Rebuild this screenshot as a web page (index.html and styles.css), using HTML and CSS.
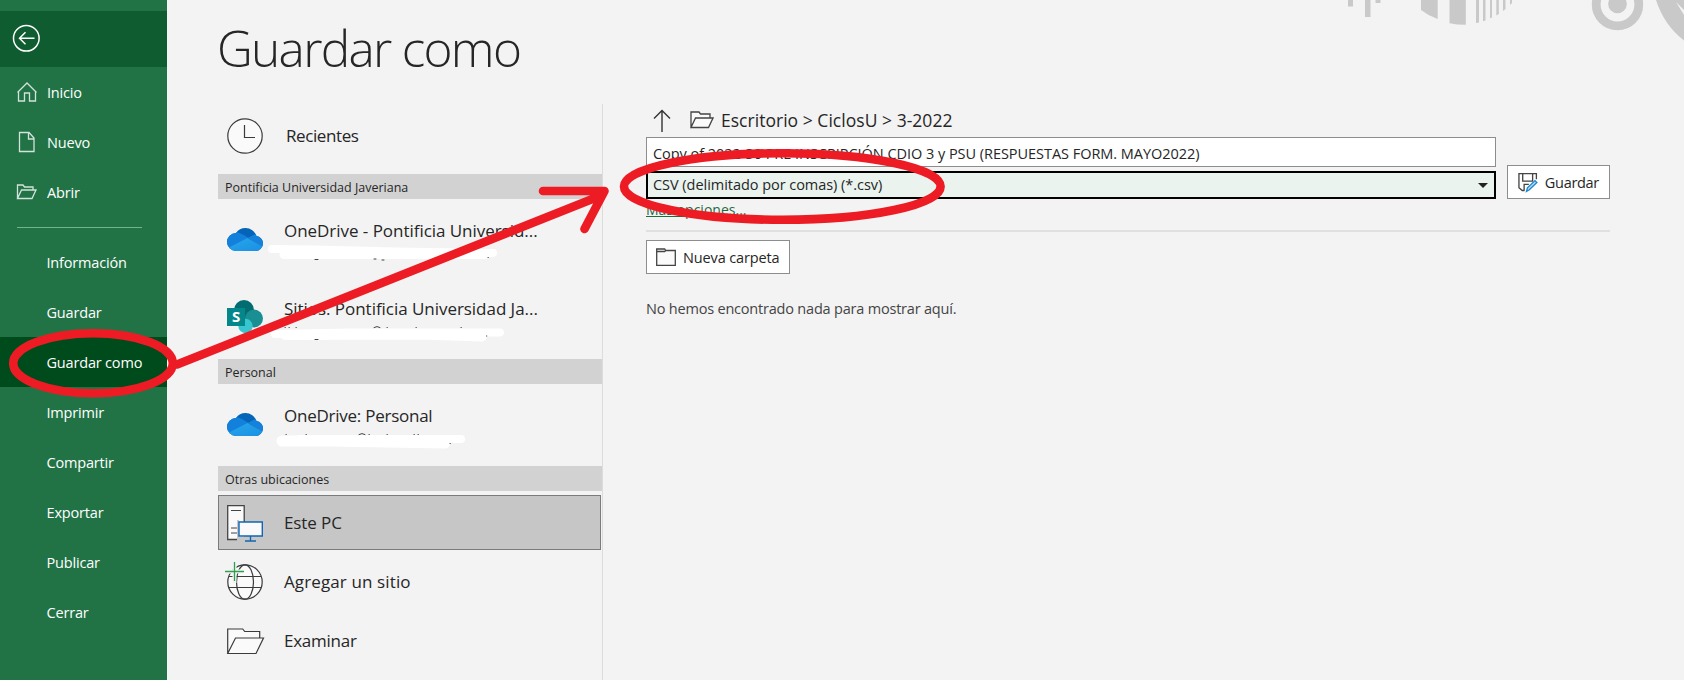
FILE: index.html
```
<!DOCTYPE html>
<html lang="es">
<head>
<meta charset="utf-8">
<title>Guardar como</title>
<link rel="stylesheet" href="styles.css">
</head>
<body>
<div class="app">
  <nav class="sidebar">
    <div class="back">
      <svg width="28" height="28" viewBox="0 0 28 28" fill="none" stroke="#fff" stroke-width="1.500"><circle cx="14.300" cy="14.300" r="12.800"/><path d="M22.500 14.300H8M13.500 8.300l-6 6 6 6"/></svg>
    </div>
    <a class="nav-item"><svg class="nav-icon" viewBox="0 0 20 20"><path d="M.5 10.500L10 1l9.500 9.500M1.500 10v9h6v-8h5v8h6v-9"/></svg><span>Inicio</span></a>
    <a class="nav-item"><svg class="nav-icon" viewBox="0 0 20 20"><path d="M2.500.5H12l5 5.500v13.500H2.500zM11.500.5V7H17"/></svg><span>Nuevo</span></a>
    <a class="nav-item"><svg class="nav-icon" viewBox="0 0 20 20"><path d="M.5 16.500V3H6l1.500 2H16v3M.5 16.500L4.500 8h14.500l-4 8.500z"/></svg><span>Abrir</span></a>
    <div class="nav-rule"></div>
    <a class="nav-item">Información</a>
    <a class="nav-item">Guardar</a>
    <a class="nav-item active">Guardar como</a>
    <a class="nav-item">Imprimir</a>
    <a class="nav-item">Compartir</a>
    <a class="nav-item">Exportar</a>
    <a class="nav-item">Publicar</a>
    <a class="nav-item">Cerrar</a>
  </nav>

  <main class="main">
    <h1 class="title">Guardar como</h1>
    <div class="columns">
      <section class="places">
        <div class="place recent">
          <svg class="place-icon" viewBox="0 0 36 36"><circle cx="18" cy="18" r="17.200" fill="#fafafa" stroke="#3b3b3b" stroke-width="1.200"/><path d="M17.500 7v12.500H28" fill="none" stroke="#3b3b3b" stroke-width="1.200"/></svg>
          <span>Recientes</span>
        </div>
        <h2 class="group">Pontificia Universidad Javeriana</h2>
        <div class="place account">
          <svg class="place-icon" viewBox="0 0 36 36"><use href="#cloud"/></svg>
          <span class="wide">OneDrive - Pontificia Universid...</span>
        </div>
        <div class="place account">
          <svg class="place-icon" viewBox="0 0 36 36">
            <circle cx="17" cy="11" r="10" fill="#036c70"/><circle cx="27" cy="19.500" r="9" fill="#1a8f93"/><circle cx="18.500" cy="27" r="7.200" fill="#37c6d0"/>
            <rect y="9" width="18" height="18" fill="#03878b"/><text class="badge" x="9" y="23.300">S</text>
          </svg>
          <span class="wide">Sitios: Pontificia Universidad Ja...</span>
        </div>
        <h2 class="group spaced">Personal</h2>
        <div class="place account">
          <svg class="place-icon" viewBox="0 0 36 36"><use href="#cloud"/></svg>
          <span>OneDrive: Personal</span>
        </div>
        <h2 class="group spaced">Otras ubicaciones</h2>
        <div class="place other selected">
          <svg class="place-icon" viewBox="0 0 36 36"><path d="M17 34.500H.7V.7h16.500V17" fill="#fafafa" stroke="#444" stroke-width="1.300"/><path d="M4 5.500h10M4 23h7M4 28h7" stroke="#444" stroke-width="1.200"/><path d="M10 15h2v17h5v4h-7z" fill="#c6c6c6"/><path d="M12 17h23.300v14H12z" fill="#fafafa" stroke="#1267b4" stroke-width="1.400"/><path d="M23.500 31v5M18 36h11" stroke="#1267b4" stroke-width="1.400"/></svg>
          <span>Este PC</span>
        </div>
        <div class="place other">
          <svg class="place-icon" viewBox="0 0 36 36"><g fill="none" stroke="#3b3b3b" stroke-width="1.200"><circle cx="18" cy="18" r="17.200" fill="#fafafa"/><ellipse cx="18" cy="18" rx="8.500" ry="17.200"/><path d="M2 12.500h32M2 23.500h32"/></g><path d="M5.500-3h4v8.500h7v4h-7V19h-4V9.500H-3v-4h8.500z" fill="#f3f3f3"/><path d="M-2 7.500h19M7.500-2v19" stroke="#2ca24c" stroke-width="1.300"/></svg>
          <span class="wider">Agregar un sitio</span>
        </div>
        <div class="place other">
          <svg class="place-icon" viewBox="0 0 36 36"><path d="M.7 30.500V6h15l2 2.500h15V15M.7 30.500L8.500 15h28l-7.500 15.500z" fill="#fafafa" stroke="#3b3b3b" stroke-width="1.200"/></svg>
          <span>Examinar</span>
        </div>
      </section>

      <section class="detail">
        <div class="path">
          <svg width="18" height="24" viewBox="0 0 18 24" fill="none" stroke="#333" stroke-width="1.400"><path d="M9 23V1.500M1 9.500L9 1.500l8 8"/></svg>
          <svg class="path-folder" width="24" height="18" viewBox="0 0 24 18" fill="#fafafa" stroke="#444" stroke-width="1.300"><path d="M1 16.500V1h8l1.500 2H20v4M1 16.500L5.500 7H23l-4.500 9.500z"/></svg>
          <span>Escritorio &gt; CiclosU &gt; 3-2022</span>
        </div>
        <div class="form">
          <div class="fields">
            <div class="field">Copy of 2022-30 PRE INSCRIPCIÓN CDIO 3 y PSU (RESPUESTAS FORM. MAYO2022)</div>
            <div class="select"><span>CSV (delimitado por comas) (*.csv)</span><i class="caret"></i></div>
            <a class="more">Más opciones...</a>
          </div>
          <button class="btn save">
            <svg width="21" height="21" viewBox="0 0 21 21" fill="none" stroke="#444" stroke-width="1.400"><path d="M7 19H4.500L1 16V1h18.500v6M5 1v8h10.500V1M6.500 19v-6.500h5"/><path d="M9 20l1-3.800 8-7.700 2 2-8 7.700z" fill="#b5daf3" stroke="#1a86d0"/></svg>
            <span>Guardar</span>
          </button>
        </div>
        <hr class="rule">
        <button class="btn folder">
          <svg width="20" height="18" viewBox="0 0 20 18" fill="#fafafa" stroke="#444" stroke-width="1.300"><path d="M.7 1h8l1 1.500h9.600v14.800H.7zM.7 3.500h8l1-1"/></svg>
          <span>Nueva carpeta</span>
        </button>
        <p class="empty">No hemos encontrado nada para mostrar aquí.</p>
      </section>
    </div>
  </main>

  <svg class="decor" width="384" height="60" viewBox="0 0 384 60" fill="#c9c9c9">
    <path d="M48 0h5v6.500h-5zM65 0h5.500v17H65zM75.500 0h5v3h-5zM121 0h16.700v19q-9-3-16.700-9zM149.500 0h16.300v24.700q-9 0-16.300-1.500zM176 0h3v22.500l-3 .5zM183 0h2.500v20.500l-2.500.7zM190 0h2v17.500l-2 .8zM196.300 0h2.500v14l-2.500 1.500zM203 0h2.500v9l-2.500 2zM210 0h2v3l-2 2z"/>
    <circle cx="317.500" cy="4.500" r="21.300" fill="none" stroke="#c9c9c9" stroke-width="8.800"/><circle cx="317.500" cy="4" r="9.300"/>
    <path d="M356 0q8 25 28 40.500V15L376 2l8 8V0z"/>
  </svg>

  <svg class="marks" width="1684" height="680" viewBox="0 0 1684 680" fill="none" stroke-linecap="round" stroke-linejoin="round">
    <g stroke="#fff">
      <path d="M272 249L315 249.500 395 251.500 493 253" stroke-width="8"/><path d="M284 254.500H485" stroke-width="9"/>
      <path d="M275 334L350 332.500 500 332.500" stroke-width="8"/><path d="M285 335.500L420 335 482 337" stroke-width="9"/>
      <path d="M282 441L330 441 445 443" stroke-width="11"/><path d="M300 439H461" stroke-width="8"/>
    </g>
    <path d="M315 259.500h3M374 259h2M382 260h2M488 257.500h.3M285 327.500h.3M289 327.500h.3M296 327.500h.3M374 327.500q3-2 6 0M387 327.500h.3M416 327.500h.3M461 327.500h.3M315 339.500h3M486.500 336h.3M286 434.500h.3M306 434.500h.3M359 434.500q3-2 6 0M369 434.500h.3M387 434.500h.3M414 434.500h.3M418 434.500h.3M450 443.500h.3" stroke="#444" stroke-width="1"/>
    <g stroke="#ed1c24" stroke-width="8.600">
      <ellipse cx="93" cy="363.300" rx="79.800" ry="30"/>
      <ellipse cx="782.300" cy="186.500" rx="158.300" ry="33.300"/>
      <path d="M177 364.500L600 196M543 191H604.500L584.500 229"/>
    </g>
  </svg>
  <svg width="0" height="0" class="defs"><defs>
    <linearGradient id="cloud-base" x1="0" y1="0" x2="1" y2="1"><stop offset="0" stop-color="#28a8ea"/><stop offset="1" stop-color="#1a8fe3"/></linearGradient>
    <clipPath id="cloud-clip"><circle cx="9" cy="21" r="9"/><circle cx="18.500" cy="18.500" r="11.500"/><circle cx="28.500" cy="22.500" r="7.500"/><rect x="9" y="20" width="19.500" height="10"/></clipPath>
    <g id="cloud"><g clip-path="url(#cloud-clip)"><path d="M0 0h36v36H0z" fill="#0364b8"/><path d="M0 11h9q6 1 13 6.500L0 28z" fill="#1380dc"/><path d="M20.500 17l8-4h8v14z" fill="#1482da"/><path d="M0 27.500L20.500 17 37 26.500V30H0z" fill="url(#cloud-base)"/></g></g>
  </defs></svg>
</div>
</body>
</html>
```
FILE: styles.css
```
* { box-sizing: border-box; }
body { margin: 0; background: #f3f3f3; font-family: "Open Sans", "Noto Sans", sans-serif; color: #262626; }
.app { position: relative; display: flex; width: 1684px; height: 680px; overflow: hidden; }
.sidebar { width: 167px; background: #217346; padding-top: 11px; flex: none; }
.back { height: 56px; background: #0e5c2f; padding: 13px 12px; }
.back svg { display: block; }
.nav-item { display: flex; align-items: center; height: 50px; padding-left: 46.500px; color: #fff; font-size: 14.5px; letter-spacing: -0.18px; white-space: nowrap; }
.nav-icon { width: 20px; height: 20px; margin: 0 10px 0 -29.500px; fill: none; stroke: #d3e3da; stroke-width: 1.3; overflow: visible; }
.nav-rule { height: 1px; margin: 10px 25px 9px 17px; background: #6fb58b; }
.active { background: #004b1c; }
.main { flex: 1; padding-left: 50px; }
.title { margin: 0; height: 104px; padding-top: 13px; font-weight: 300; font-size: 49.5px; line-height: 70px; letter-spacing: -1.7px; }
.columns { display: flex; height: 576px; padding-left: 1px; }
.places { width: 385px; border-right: 1px solid #dcdcdc; }
.place { display: flex; align-items: center; padding-left: 9px; font-size: 17px; letter-spacing: -0.25px; white-space: nowrap; }
.place span { padding-bottom: 2px; }
.place .wide { letter-spacing: -0.04px; }
.place .wider { letter-spacing: 0.12px; }
.place-icon { width: 36px; height: 36px; margin-right: 21px; overflow: visible; flex: none; }
.recent { height: 70px; padding-bottom: 6px; letter-spacing: -0.4px; }
.recent .place-icon { margin-right: 23px; }
.group { margin: 0; height: 25px; padding-left: 7px; background: #d2d2d2; font-size: 12.5px; font-weight: 400; line-height: 27px; }
.spaced { margin-top: 4px; }
.account { height: 78px; padding-bottom: 14px; }
.account .place-icon { transform: translateY(8px); }
.badge { font: 700 15px "Open Sans", sans-serif; fill: #fff; text-anchor: middle; }
.other { height: 55px; margin-top: 4px; }
.other span { padding-bottom: 0; }
.selected { width: 383px; padding-left: 8px; background: #c6c6c6; border: 1px solid #7b7b7b; letter-spacing: -0.1px; }
.detail { width: 964px; margin-left: 43px; }
.path { display: flex; align-items: center; height: 33px; padding-left: 7px; font-size: 17.5px; letter-spacing: 0.03px; }
.path span { padding-bottom: 2px; }
.path-folder { margin: 0 7px 2px 19px; }
.form { display: flex; gap: 11px; }
.fields { width: 850px; }
.field, .select { display: flex; align-items: center; font-size: 14.5px; letter-spacing: -0.04px; white-space: nowrap; }
.field { height: 30px; border: 1px solid #8d8d8d; background: #fff; padding: 2px 6px 0; }
.select { height: 28px; margin-top: 4px; border: 2px solid #000; background: #eaf3ee; padding: 0 6px 0 5px; justify-content: space-between; }
.select span { padding-bottom: 2px; }
.caret { border: 5px solid transparent; border-top-color: #222; border-bottom: 0; }
.more { display: block; font-size: 14px; line-height: 22px; color: #1e6b41; text-decoration: underline; }
.btn { display: flex; align-items: center; height: 34px; border: 1px solid #8d8d8d; background: #fff; font: 14.5px "Open Sans", sans-serif; letter-spacing: -0.13px; color: #262626; padding: 0 10px; white-space: nowrap; }
.save { width: 103px; margin-top: 28px; gap: 7px; letter-spacing: -0.3px; }
.rule { height: 2px; margin: 9px 0 8px; border: 0; background: #e0e0e0; }
.folder { width: 144px; gap: 7px; padding: 0 9px; }
.empty { margin: 24px 0 0; font-size: 14.5px; letter-spacing: -0.2px; line-height: 22px; color: #444; }
.decor { position: absolute; left: 1300px; top: 0; }
.marks { position: absolute; left: 0; top: 0; pointer-events: none; }
.defs { position: absolute; }
```
